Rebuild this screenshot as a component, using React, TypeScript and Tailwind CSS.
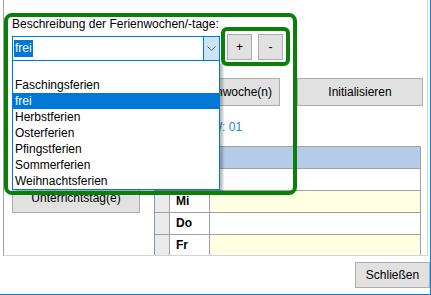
import { ReactNode } from "react";

const items = ["", "Faschingsferien", "frei", "Herbstferien", "Osterferien", "Pfingstferien", "Sommerferien", "Weihnachtsferien"];
const days = ["Mo", "Di", "Mi", "Do", "Fr"];

function WinButton({ className, children }: { className?: string; children?: ReactNode }) {
  return (
    <div className={`flex items-center justify-center border border-[#adadad] bg-[#e1e1e1] text-black ${className ?? ""}`}>
      {children}
    </div>
  );
}

export default function App() {
  return (
    <div className="relative h-[295px] w-[431px] overflow-hidden border-r border-b border-[#1979ca] bg-white font-['Liberation_Sans',Arial,sans-serif] text-[12px] leading-[15px] text-black">
      {/* main panel */}
      <div className="relative ml-[3px] h-[256px] w-[425px] overflow-hidden border-l border-r border-b border-l-[#a0a0a0] border-r-[#d4d4d4] border-b-[#d4d4d4]">
        <div className="pl-[8px] pt-[17px]">
          <p>Beschreibung der Ferienwochen/-tage:</p>

          <div className="mt-[2px] flex h-[26px] items-start">
            <div className="mt-[2px] flex h-[25px] w-[208px] border border-[#0078d7] bg-white">
              <div className="flex flex-1 items-center pl-[1px]">
                <span className="bg-[#0078d7] px-[1px] leading-[17px] text-white">frei</span>
              </div>
              <div className="flex w-[16px] items-center justify-center border-l border-[#0078d7] bg-[#cce4f7]">
                <svg width="9" height="5" viewBox="0 0 9 5">
                  <path d="M0.5 0.5 L4.5 4.5 L8.5 0.5" fill="none" stroke="#606060" strokeWidth="1" />
                </svg>
              </div>
            </div>
            <WinButton className="ml-[7px] h-[26px] w-[25px]">+</WinButton>
            <WinButton className="ml-[6px] h-[26px] w-[25px]">-</WinButton>
          </div>

          <div className="mt-[18px] flex h-[28px]">
            {/* covered by the open list */}
            <WinButton className="w-[128px]" />
            <WinButton className="ml-[6px] w-[134px] !justify-end pr-[7px]">Ferienwoche(n)</WinButton>
            <WinButton className="ml-[17px] w-[126px]">Initialisieren</WinButton>
          </div>

          <div className="flex">
            <div className="w-[128px] pt-[78px]">
              <WinButton className="h-[29px] w-[128px]">Unterrichtstag(e)</WinButton>
            </div>
            <div className="ml-[14px] h-[150px] w-[267px] pt-[14px]">
              <p className="pl-[49px] text-[#1e88c8]">KW: 01</p>
              <div className="mt-[11px] border-t border-l border-r border-t-[#a0a0a0] border-l-[#7d97bb] border-r-[#a0a0a0]">
                {days.map((d, i) => (
                  <div
                    key={d}
                    className={`flex h-[22px] border-b border-[#a0a0a0] ${i === 0 ? "bg-[#b6cbe8]" : i % 2 === 0 ? "bg-[#ffffe1]" : "bg-white"}`}
                  >
                    <div className="w-[15px] border-r border-[#a0a0a0] bg-[#ebebeb]" />
                    <div className="flex w-[40px] items-center border-r border-[#a0a0a0] bg-white pl-[6px] font-bold">{d}</div>
                    <div className="flex-1" />
                  </div>
                ))}
              </div>
            </div>
          </div>
        </div>

        {/* open dropdown list */}
        <div className="absolute top-[60px] left-[8px] w-[208px] border border-[#0078d7] bg-white shadow-[3px_3px_2px_rgba(0,0,0,0.25)]">
          {items.map((it) => (
            <div
              key={it || "leer"}
              className={`h-[16px] pl-[2px] leading-[16px] ${it === "frei" ? "bg-[#0078d7] text-white" : ""}`}
            >
              {it}
            </div>
          ))}
        </div>

        {/* green highlight frames */}
        <div className="absolute top-[13px] left-0 h-[182px] w-[293px] rounded-[8px] border-[4px] border-[#0a800a]" />
        <div className="absolute top-[27px] left-[217px] h-[39px] w-[69px] rounded-[6px] border-[4px] border-[#0a800a]" />
      </div>

      {/* footer */}
      <div className="flex justify-end pt-[6px]">
        <WinButton className="h-[26px] w-[75px]">Schließen</WinButton>
      </div>
    </div>
  );
}
